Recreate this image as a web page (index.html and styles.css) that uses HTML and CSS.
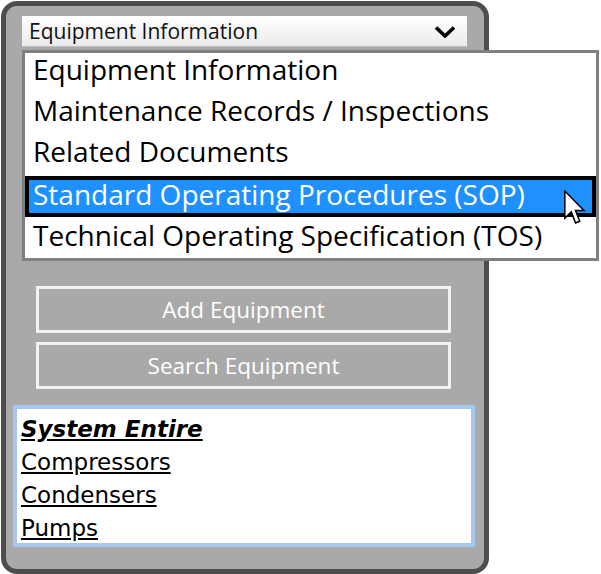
FILE: index.html
```html
<!DOCTYPE html>
<html>
<head>
<meta charset="utf-8">
<link rel="stylesheet" href="styles.css">
</head>
<body>
<div class="panel">
  <div class="select-wrap">
    <div class="select">
      <span class="select-text">Equipment Information</span>
      <svg class="chev" width="22" height="12" viewBox="0 0 22 12"><polyline points="2,1.5 11,10 20,1.5" fill="none" stroke="#000" stroke-width="3.6" stroke-linejoin="miter"/></svg>
    </div>
    <ul class="menu">
      <li class="item">Equipment Information</li>
      <li class="item">Maintenance Records / Inspections</li>
      <li class="item">Related Documents</li>
      <li class="item selected">Standard Operating Procedures (SOP)
        <svg class="cursor" width="22" height="36" viewBox="0 0 13 21"><path d="M0.5,0.5 L0.5,16.5 L4.3,12.8 L6.8,19.3 L9.3,18.3 L6.8,12 L11.8,12 Z" fill="#fff" stroke="#000" stroke-width="0.9" stroke-linejoin="miter"/></svg>
      </li>
      <li class="item last">Technical Operating Specification (TOS)</li>
    </ul>
  </div>
  <div class="buttons">
    <div class="btn">Add Equipment</div>
    <div class="btn">Search Equipment</div>
  </div>
  <div class="listbox">
    <div class="lb-head">System Entire</div>
    <div class="lb-link">Compressors</div>
    <div class="lb-link">Condensers</div>
    <div class="lb-link">Pumps</div>
  </div>
</div>
</body>
</html>
```
FILE: styles.css
```css
html, body {
  margin: 0;
  padding: 0;
  background: #fff;
}
body {
  font-family: "Open Sans", "DejaVu Sans", sans-serif;
  width: 601px;
  height: 574px;
  overflow: hidden;
}
.panel {
  box-sizing: border-box;
  margin: 1px 0 0 1px;
  width: 488px;
  height: 573px;
  border: 5px solid #4d4d4d;
  border-radius: 16px;
  background: #a9a9a9;
  display: flex;
  flex-direction: column;
}
.select-wrap {
  position: relative;
  margin: 10px 0 0 16px;
}
.select {
  box-sizing: border-box;
  width: 445px;
  height: 31px;
  background: linear-gradient(#ffffff, #ebebeb);
  border-bottom: 1px solid #bdbdbd;
  display: flex;
  align-items: center;
  justify-content: space-between;
  padding: 0 11px 0 7px;
}
.select-text {
  font-size: 21px;
  color: #111;
}
.chev {
  display: block;
  margin-top: 2px;
}
.menu {
  position: absolute;
  left: 0;
  top: 34px;
  z-index: 2;
  box-sizing: border-box;
  width: 577px;
  height: 211px;
  margin: 0;
  padding: 0;
  list-style: none;
  background: #fff;
  border: 3px solid #808080;
  display: flex;
  flex-direction: column;
}
.item {
  box-sizing: border-box;
  height: 41px;
  flex: none;
  line-height: 32px;
  font-size: 28px;
  padding-left: 8px;
  color: #000;
  white-space: nowrap;
  position: relative;
}
.item.last {
  line-height: 37px;
}
.item.selected {
  background: #1e90ff;
  color: #fff;
  border: 4px solid #000;
  line-height: 29px;
  padding-left: 4px;
}
.cursor {
  position: absolute;
  left: 535px;
  top: 10px;
}
.buttons {
  margin: 239px 0 0 30px;
  display: flex;
  flex-direction: column;
  gap: 9px;
}
.btn {
  box-sizing: border-box;
  width: 415px;
  height: 47px;
  border: 3px solid #f2f2f2;
  color: #fff;
  font-size: 22.5px;
  display: flex;
  align-items: center;
  justify-content: center;
}
.listbox {
  box-sizing: border-box;
  margin: 16px 0 0 7px;
  width: 462px;
  height: 142px;
  background: #fff;
  border: 4px solid #a4c6ef;
  padding: 4px 0 0 4px;
  font-family: "DejaVu Sans", sans-serif;
}
.lb-head {
  font-size: 23px;
  font-weight: bold;
  font-style: italic;
  text-decoration: underline;
  line-height: 33px;
}
.lb-link {
  font-size: 23px;
  text-decoration: underline;
  line-height: 33px;
}
```
